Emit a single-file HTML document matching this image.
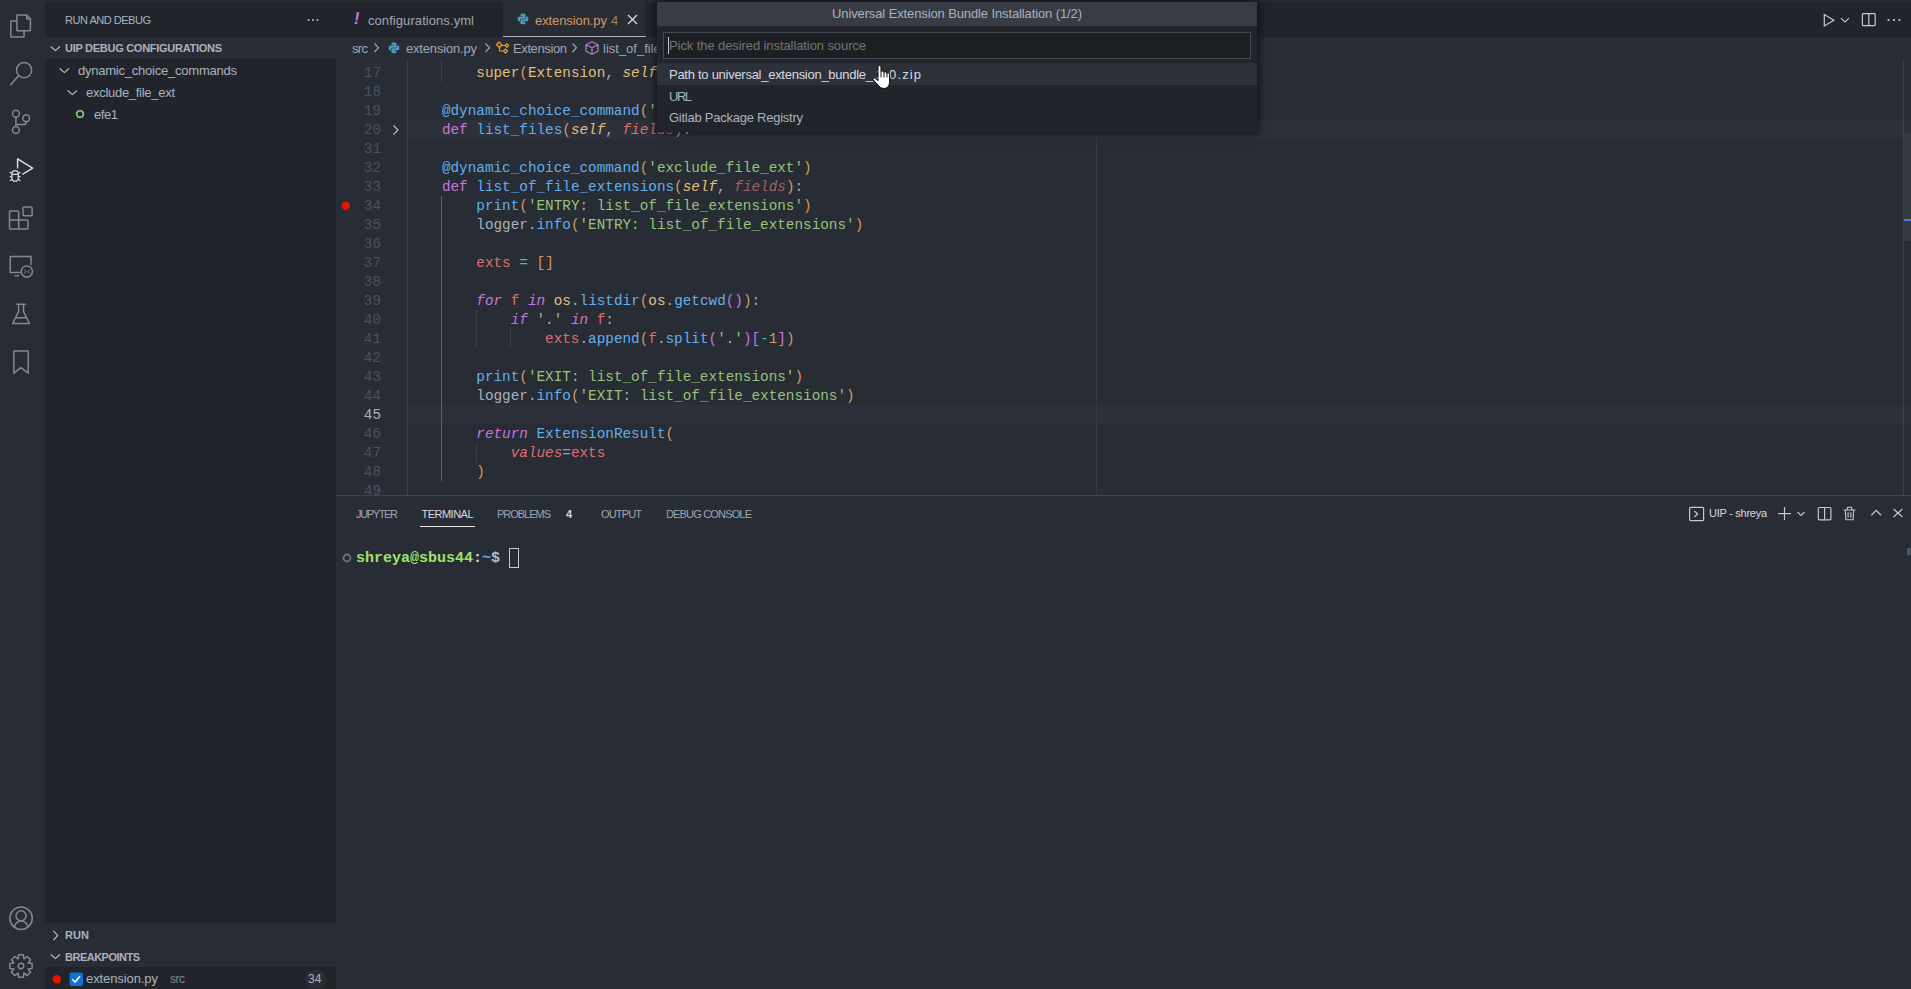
<!DOCTYPE html>
<html><head><meta charset="utf-8"><style>
html,body{margin:0;padding:0;width:1911px;height:989px;overflow:hidden;background:#282c34}
body>div,body>svg{position:absolute}
div{position:absolute}
.t{font-family:"Liberation Sans",sans-serif;white-space:pre}
.m{font-family:"Liberation Mono",monospace;font-size:14.333px;line-height:19px;white-space:pre}
.term{font-family:"Liberation Mono",monospace;font-size:15px;line-height:22px;font-weight:bold;white-space:pre}
span{position:static}
</style></head><body>
<div style="left:0px;top:0px;width:1911px;height:989px;background:#282c34;"></div>
<div style="left:45px;top:2px;width:291px;height:987px;background:#21252b;"></div>
<div style="left:336px;top:2px;width:1575px;height:35px;background:#21252b;"></div>
<div style="left:45px;top:37px;width:291px;height:22px;background:#282c34;"></div>
<div style="left:45px;top:923px;width:291px;height:44px;background:#282c34;"></div>
<svg style="position:absolute;left:0px;top:0px;" width="45" height="989" viewBox="0 0 45 989" fill="none">
<g stroke="#85888e" stroke-width="1.5" stroke-linejoin="round">
 <path d="M16.9 30.3 V15.6 Q16.9 15 17.5 15 H26.7 L30.4 18.7 V30.2 Q30.4 30.8 29.8 30.8 H17.5 Q16.9 30.8 16.9 30.2 Z"/>
 <path d="M26.7 15 V18.7 H30.4"/>
 <path d="M16.9 20.9 H11.4 Q10.8 20.9 10.8 21.5 V36.4 Q10.8 37 11.4 37 H23.5 Q24.1 37 24.1 36.4 V30.8"/>
 <circle cx="24.1" cy="70.1" r="7.6"/>
 <path d="M18.8 75.6 L10.8 84.8" stroke-linecap="round"/>
 <circle cx="15.9" cy="113.7" r="3.4"/>
 <circle cx="26.2" cy="118.2" r="3.4"/>
 <circle cx="15.9" cy="130" r="3.4"/>
 <path d="M15.9 117.1 V126.6"/>
 <path d="M26.2 121.6 V122.5 Q26.2 124.4 24.3 124.4 H15.9"/>
 <path d="M9.5 212.1 Q9.5 211.1 10.5 211.1 H17.7 Q18.7 211.1 18.7 212.1 V220 H26.9 Q27.9 220 27.9 221 V228 Q27.9 229 26.9 229 H10.5 Q9.5 229 9.5 228 Z M9.5 220 H18.7 V229"/>
 <rect x="23" y="207" width="9.1" height="8.7" rx="1"/>
 <path d="M20.5 272.6 H10.2 V256.6 H31 V265.3"/>
 <path d="M14.5 275.8 H19.2"/>
 <circle cx="26.8" cy="271.5" r="5.6"/>
 <path d="M24.2 269.8 L26 271.5 L24.2 273.2 M29.4 269.8 L27.6 271.5 L29.4 273.2" stroke-width="1"/>
 <path d="M16.3 304.2 H25.9 M18.6 304.2 V311.5 L12.6 323.6 H29.5 L23.5 311.5 V304.2 M15.6 317.8 H26.4"/>
 <path d="M13.9 350.9 H28.2 V373.2 L21 367.6 L13.9 373.2 Z"/>
 <circle cx="21.05" cy="918.2" r="11.2"/>
 <circle cx="21" cy="915.7" r="5"/>
 <path d="M14.1 927.5 Q16 921.1 21.2 921.1 Q26.4 921.1 28.2 927.3"/>
</g>
<g stroke="#d7dae0" stroke-width="1.5" stroke-linejoin="round">
 <path d="M17.6 168.6 V158.8 L32.6 168.2 L22.5 174.3"/>
 <path d="M11.9 174 Q11.9 170.7 15.1 170.7 Q18.3 170.7 18.3 174 V177.9 Q18.3 181.2 15.1 181.2 Q11.9 181.2 11.9 177.9 Z M11.9 174.3 H18.3" stroke-width="1.3"/>
 <path d="M9.7 172 L11.7 173.4 M20.5 172 L18.5 173.4 M9.7 176.6 H11.7 M18.5 176.6 H20.5 M9.7 180.8 L11.7 179.6 M20.5 180.8 L18.5 179.6" stroke-width="1.2"/>
</g>
<path d="M32.14 963.60 L32.14 968.40 L28.02 968.91 L30.58 972.18 L27.18 975.58 L23.91 973.02 L23.40 977.14 L18.60 977.14 L18.09 973.02 L14.82 975.58 L11.42 972.18 L13.98 968.91 L9.86 968.40 L9.86 963.60 L13.98 963.09 L11.42 959.82 L14.82 956.42 L18.09 958.98 L18.60 954.86 L23.40 954.86 L23.91 958.98 L27.18 956.42 L30.58 959.82 L28.02 963.09 Z" stroke="#85888e" stroke-width="1.5" stroke-linejoin="round"/><circle cx="21" cy="966" r="2.7" stroke="#85888e" stroke-width="1.5"/></svg>
<div class="t" style="left:65px;top:10.00px;font-size:11px;line-height:20px;color:#abb2bf;letter-spacing:-0.473px;">RUN AND DEBUG</div>
<svg style="position:absolute;left:300px;top:14px;" width="24" height="12" viewBox="0 0 24 12" fill="none"><circle cx="8.5" cy="6" r="1.1" fill="#abb2bf"/><circle cx="13" cy="6" r="1.1" fill="#abb2bf"/><circle cx="17.5" cy="6" r="1.1" fill="#abb2bf"/></svg>
<svg style="position:absolute;left:49.5px;top:44.7px;" width="12" height="8" viewBox="0 0 12 8" fill="none"><path d="M0.7 1.5 L5.35 5.6 L10 1.5" stroke="#c0c3c8" stroke-width="1.1"/></svg>
<div class="t" style="left:65px;top:38.00px;font-size:11px;line-height:20px;color:#abb2bf;font-weight:bold;letter-spacing:-0.277px;">UIP DEBUG CONFIGURATIONS</div>
<svg style="position:absolute;left:58.5px;top:67.0px;" width="12" height="8" viewBox="0 0 12 8" fill="none"><path d="M0.7 1.5 L5.35 5.6 L10 1.5" stroke="#c0c3c8" stroke-width="1.1"/></svg>
<div class="t" style="left:78px;top:61.20px;font-size:13px;line-height:20px;color:#abb2bf;letter-spacing:-0.229px;">dynamic_choice_commands</div>
<svg style="position:absolute;left:66.5px;top:89.0px;" width="12" height="8" viewBox="0 0 12 8" fill="none"><path d="M0.7 1.5 L5.35 5.6 L10 1.5" stroke="#c0c3c8" stroke-width="1.1"/></svg>
<div class="t" style="left:86px;top:83.20px;font-size:13px;line-height:20px;color:#abb2bf;letter-spacing:-0.282px;">exclude_file_ext</div>
<svg style="position:absolute;left:74px;top:108px;" width="12" height="12" viewBox="0 0 12 12" fill="none"><circle cx="6" cy="6" r="3.3" stroke="#89d185" stroke-width="1.6"/></svg>
<div class="t" style="left:94px;top:105.20px;font-size:13px;line-height:20px;color:#abb2bf;letter-spacing:-0.434px;">efe1</div>
<svg style="position:absolute;left:51.5px;top:929.5px;" width="8" height="12" viewBox="0 0 8 12" fill="none"><path d="M1.5 0.8 L5.6 5.45 L1.5 10.1" stroke="#c0c3c8" stroke-width="1.1"/></svg>
<div class="t" style="left:65px;top:925.00px;font-size:11px;line-height:20px;color:#abb2bf;font-weight:bold;letter-spacing:0.084px;">RUN</div>
<svg style="position:absolute;left:49.5px;top:952.7px;" width="12" height="8" viewBox="0 0 12 8" fill="none"><path d="M0.7 1.5 L5.35 5.6 L10 1.5" stroke="#c0c3c8" stroke-width="1.1"/></svg>
<div class="t" style="left:65px;top:946.80px;font-size:11px;line-height:20px;color:#abb2bf;font-weight:bold;letter-spacing:-0.506px;">BREAKPOINTS</div>
<svg style="position:absolute;left:50px;top:973px;" width="13" height="13" viewBox="0 0 13 13" fill="none"><circle cx="6.8" cy="6.2" r="4.2" fill="#e51400"/></svg>
<svg style="position:absolute;left:69px;top:972px;" width="15" height="15" viewBox="0 0 15 15" fill="none"><rect x="0.5" y="0.5" width="13.5" height="13.5" rx="2" fill="#0e72d6"/><path d="M3.3 7.3 L6 10 L11 4.2" stroke="#fff" stroke-width="1.6"/></svg>
<div class="t" style="left:86px;top:969.00px;font-size:13px;line-height:20px;color:#abb2bf;letter-spacing:-0.090px;">extension.py</div>
<div class="t" style="left:170px;top:969.00px;font-size:12px;line-height:20px;color:#7f848e;letter-spacing:-0.498px;">src</div>
<div style="left:305px;top:970px;width:21px;height:18px;background:#292d34;border-radius:9px;"></div>
<div class="t" style="left:308px;top:969.00px;font-size:12px;line-height:20px;color:#abb2bf;letter-spacing:0.000px;">34</div>
<div style="left:503px;top:2px;width:143px;height:35px;background:#282c34;"></div>
<div style="left:503px;top:36px;width:143px;height:1px;background:#b4b4b4;"></div>
<div class="t" style="left:353.5px;top:9.20px;font-size:17px;line-height:20px;color:#c678dd;font-weight:bold;letter-spacing:0.000px;transform:skewX(-10deg);">!</div>
<div class="t" style="left:368px;top:11.00px;font-size:13px;line-height:20px;color:#9da5b4;letter-spacing:0.072px;">configurations.yml</div>
<svg style="position:absolute;left:517px;top:13px;" width="12" height="12" viewBox="0 0 12 12" fill="none"><path d="M6 0.6 C3.4 0.6 3.6 1.7 3.6 1.7 V3.3 H6.1 V3.8 H2.3 C2.3 3.8 0.6 3.6 0.6 6.1 C0.6 8.6 2.1 8.5 2.1 8.5 H3 V7.3 C3 7.3 2.9 5.8 4.5 5.8 H7.1 C7.1 5.8 8.6 5.8 8.6 4.4 V2 C8.6 2 8.8 0.6 6 0.6 Z" fill="#519aba"/><path d="M6 11.4 C8.6 11.4 8.4 10.3 8.4 10.3 V8.7 H5.9 V8.2 H9.7 C9.7 8.2 11.4 8.4 11.4 5.9 C11.4 3.4 9.9 3.5 9.9 3.5 H9 V4.7 C9 4.7 9.1 6.2 7.5 6.2 H4.9 C4.9 6.2 3.4 6.2 3.4 7.6 V10 C3.4 10 3.2 11.4 6 11.4 Z" fill="#519aba"/></svg>
<div class="t" style="left:535px;top:11.00px;font-size:13px;line-height:20px;color:#d19a66;letter-spacing:-0.090px;">extension.py</div>
<div class="t" style="left:611px;top:11.00px;font-size:13px;line-height:20px;color:#a9825a;letter-spacing:0.770px;">4</div>
<svg style="position:absolute;left:626px;top:13px;" width="13" height="13" viewBox="0 0 13 13" fill="none"><path d="M2 2 L11 11 M11 2 L2 11" stroke="#d7dae0" stroke-width="1.3"/></svg>
<svg style="position:absolute;left:1818px;top:10px;" width="90" height="20" viewBox="0 0 90 20" fill="none"><path d="M6.3 4.6 V16 L15.9 10.3 Z" stroke="#c5c8ce" stroke-width="1.2" stroke-linejoin="miter"/><path d="M23 8.2 L27 12 L31 8.2" stroke="#c5c8ce" stroke-width="1.1"/><rect x="44.4" y="3.6" width="12.8" height="12" rx="0.8" stroke="#c5c8ce" stroke-width="1.2"/><path d="M50.8 3.6 V15.6" stroke="#c5c8ce" stroke-width="1.2"/><circle cx="70.5" cy="10" r="1.1" fill="#c5c8ce"/><circle cx="76" cy="10" r="1.1" fill="#c5c8ce"/><circle cx="81.5" cy="10" r="1.1" fill="#c5c8ce"/></svg>
<div class="t" style="left:352px;top:38.70px;font-size:13px;line-height:20px;color:#a0a7b4;letter-spacing:-0.665px;">src</div>
<svg style="position:absolute;left:373px;top:42px;" width="8" height="12" viewBox="0 0 8 12" fill="none"><path d="M1.5 1.5 L5.5 5.75 L1.5 10" stroke="#a0a7b4" stroke-width="1.2"/></svg>
<svg style="position:absolute;left:388px;top:42px;" width="12" height="12" viewBox="0 0 12 12" fill="none"><path d="M6 0.6 C3.4 0.6 3.6 1.7 3.6 1.7 V3.3 H6.1 V3.8 H2.3 C2.3 3.8 0.6 3.6 0.6 6.1 C0.6 8.6 2.1 8.5 2.1 8.5 H3 V7.3 C3 7.3 2.9 5.8 4.5 5.8 H7.1 C7.1 5.8 8.6 5.8 8.6 4.4 V2 C8.6 2 8.8 0.6 6 0.6 Z" fill="#519aba"/><path d="M6 11.4 C8.6 11.4 8.4 10.3 8.4 10.3 V8.7 H5.9 V8.2 H9.7 C9.7 8.2 11.4 8.4 11.4 5.9 C11.4 3.4 9.9 3.5 9.9 3.5 H9 V4.7 C9 4.7 9.1 6.2 7.5 6.2 H4.9 C4.9 6.2 3.4 6.2 3.4 7.6 V10 C3.4 10 3.2 11.4 6 11.4 Z" fill="#519aba"/></svg>
<div class="t" style="left:406px;top:38.70px;font-size:13px;line-height:20px;color:#a0a7b4;letter-spacing:-0.181px;">extension.py</div>
<svg style="position:absolute;left:484px;top:42px;" width="8" height="12" viewBox="0 0 8 12" fill="none"><path d="M1.5 1.5 L5.5 5.75 L1.5 10" stroke="#a0a7b4" stroke-width="1.2"/></svg>
<svg style="position:absolute;left:494px;top:40px;" width="16" height="16" viewBox="0 0 16 16" fill="none"><path d="M2.5 4.5 L5 2 L8 5 L5.5 7.5 Z M5.5 7.5 V11 H9.5 M7 5.5 H11 M9.5 11 L11.5 9 L13.5 11 L11.5 13 Z M11 5.5 L12.8 3.7 L14.6 5.5 L12.8 7.3 Z" stroke="#ee9d28" stroke-width="1.2" stroke-linejoin="round"/></svg>
<div class="t" style="left:513px;top:38.70px;font-size:13px;line-height:20px;color:#a0a7b4;letter-spacing:-0.387px;">Extension</div>
<svg style="position:absolute;left:571px;top:42px;" width="8" height="12" viewBox="0 0 8 12" fill="none"><path d="M1.5 1.5 L5.5 5.75 L1.5 10" stroke="#a0a7b4" stroke-width="1.2"/></svg>
<svg style="position:absolute;left:584px;top:40px;" width="16" height="16" viewBox="0 0 16 16" fill="none"><path d="M8 1.8 L14 4.8 V11.2 L8 14.2 L2 11.2 V4.8 Z M2 4.8 L8 7.8 L14 4.8 M8 7.8 V14.2" stroke="#b180d7" stroke-width="1.2" stroke-linejoin="round"/></svg>
<div class="t" style="left:603px;top:38.70px;font-size:13px;line-height:20px;color:#a0a7b4;letter-spacing:0.000px;">list_of_file_extensions</div>
<div style="left:408px;top:120px;width:1503px;height:19px;background:#2c313c;"></div>
<div style="left:408px;top:405px;width:1503px;height:19px;background:#2c313c;"></div>
<div style="left:1096px;top:59px;width:1px;height:436px;background:#363a42;"></div>
<div style="left:407px;top:59px;width:1px;height:436px;background:#3b4048;"></div>
<div style="left:441px;top:59px;width:1px;height:23px;background:#3b4048;"></div>
<div style="left:441px;top:196px;width:1px;height:285px;background:#5c6068;"></div>
<div style="left:476px;top:310px;width:1px;height:38px;background:#3b4048;"></div>
<div style="left:476px;top:443px;width:1px;height:19px;background:#3b4048;"></div>
<div style="left:510px;top:329px;width:1px;height:19px;background:#3b4048;"></div>
<div style="left:1903px;top:59px;width:1px;height:436px;background:#3a3f4a;"></div>
<div style="left:1904px;top:133px;width:7px;height:108px;background:#343942;"></div>
<div style="left:1904px;top:219px;width:7px;height:2px;background:#4d78cc;"></div>
<div style="left:336px;top:59px;width:1567px;height:436px;overflow:hidden">
<div class="m" style="left:0;top:5px;width:45px;text-align:right;color:#495162">17</div>
<div class="m" style="left:71.5px;top:5px"><span style="color:#abb2bf;">        </span><span style="color:#e5c07b;">super</span><span style="color:#d19a66;">(</span><span style="color:#e5c07b;">Extension</span><span style="color:#abb2bf;">, </span><span style="color:#e5c07b;font-style:italic;">self</span><span style="color:#abb2bf;">, </span><span style="color:#e06c75;font-style:italic;">extension_start_fields</span><span style="color:#d19a66;">)</span><span style="color:#abb2bf;">.</span><span style="color:#61afef;">__init__</span><span style="color:#d19a66;">(</span><span style="color:#e06c75;">extension_start_fields</span><span style="color:#d19a66;">)</span></div>
<div class="m" style="left:0;top:24px;width:45px;text-align:right;color:#495162">18</div>
<div class="m" style="left:71.5px;top:24px"></div>
<div class="m" style="left:0;top:43px;width:45px;text-align:right;color:#495162">19</div>
<div class="m" style="left:71.5px;top:43px"><span style="color:#abb2bf;">    </span><span style="color:#61afef;">@dynamic_choice_command</span><span style="color:#d19a66;">(</span><span style="color:#98c379;">&#x27;exclude_file&#x27;</span><span style="color:#d19a66;">)</span></div>
<div class="m" style="left:0;top:62px;width:45px;text-align:right;color:#495162">20</div>
<div class="m" style="left:71.5px;top:62px"><span style="color:#abb2bf;">    </span><span style="color:#c678dd;">def </span><span style="color:#61afef;">list_files</span><span style="color:#d19a66;">(</span><span style="color:#e5c07b;font-style:italic;">self</span><span style="color:#abb2bf;">, </span><span style="color:#e06c75;font-style:italic;">fields</span><span style="color:#d19a66;">)</span><span style="color:#abb2bf;">:</span><span style="color:#abb2bf;"> ⋯</span></div>
<div class="m" style="left:0;top:81px;width:45px;text-align:right;color:#495162">31</div>
<div class="m" style="left:71.5px;top:81px"></div>
<div class="m" style="left:0;top:100px;width:45px;text-align:right;color:#495162">32</div>
<div class="m" style="left:71.5px;top:100px"><span style="color:#abb2bf;">    </span><span style="color:#61afef;">@dynamic_choice_command</span><span style="color:#d19a66;">(</span><span style="color:#98c379;">&#x27;exclude_file_ext&#x27;</span><span style="color:#d19a66;">)</span></div>
<div class="m" style="left:0;top:119px;width:45px;text-align:right;color:#495162">33</div>
<div class="m" style="left:71.5px;top:119px"><span style="color:#abb2bf;">    </span><span style="color:#c678dd;">def </span><span style="color:#61afef;">list_of_file_extensions</span><span style="color:#d19a66;">(</span><span style="color:#e5c07b;font-style:italic;">self</span><span style="color:#abb2bf;">, </span><span style="color:#a0616a;font-style:italic;">fields</span><span style="color:#d19a66;">)</span><span style="color:#abb2bf;">:</span></div>
<div class="m" style="left:0;top:138px;width:45px;text-align:right;color:#495162">34</div>
<div class="m" style="left:71.5px;top:138px"><span style="color:#abb2bf;">        </span><span style="color:#61afef;">print</span><span style="color:#d19a66;">(</span><span style="color:#98c379;">&#x27;ENTRY: list_of_file_extensions&#x27;</span><span style="color:#d19a66;">)</span></div>
<div class="m" style="left:0;top:157px;width:45px;text-align:right;color:#495162">35</div>
<div class="m" style="left:71.5px;top:157px"><span style="color:#abb2bf;">        </span><span style="color:#abb2bf;">logger</span><span style="color:#abb2bf;">.</span><span style="color:#61afef;">info</span><span style="color:#d19a66;">(</span><span style="color:#98c379;">&#x27;ENTRY: list_of_file_extensions&#x27;</span><span style="color:#d19a66;">)</span></div>
<div class="m" style="left:0;top:176px;width:45px;text-align:right;color:#495162">36</div>
<div class="m" style="left:71.5px;top:176px"></div>
<div class="m" style="left:0;top:195px;width:45px;text-align:right;color:#495162">37</div>
<div class="m" style="left:71.5px;top:195px"><span style="color:#abb2bf;">        </span><span style="color:#e06c75;">exts</span><span style="color:#abb2bf;"> </span><span style="color:#56b6c2;">=</span><span style="color:#abb2bf;"> </span><span style="color:#d19a66;">[]</span></div>
<div class="m" style="left:0;top:214px;width:45px;text-align:right;color:#495162">38</div>
<div class="m" style="left:71.5px;top:214px"></div>
<div class="m" style="left:0;top:233px;width:45px;text-align:right;color:#495162">39</div>
<div class="m" style="left:71.5px;top:233px"><span style="color:#abb2bf;">        </span><span style="color:#c678dd;font-style:italic;">for</span><span style="color:#abb2bf;"> </span><span style="color:#e06c75;">f</span><span style="color:#abb2bf;"> </span><span style="color:#c678dd;font-style:italic;">in</span><span style="color:#abb2bf;"> </span><span style="color:#e5c07b;">os</span><span style="color:#abb2bf;">.</span><span style="color:#61afef;">listdir</span><span style="color:#d19a66;">(</span><span style="color:#e5c07b;">os</span><span style="color:#abb2bf;">.</span><span style="color:#61afef;">getcwd</span><span style="color:#c678dd;">()</span><span style="color:#d19a66;">)</span><span style="color:#abb2bf;">:</span></div>
<div class="m" style="left:0;top:252px;width:45px;text-align:right;color:#495162">40</div>
<div class="m" style="left:71.5px;top:252px"><span style="color:#abb2bf;">            </span><span style="color:#c678dd;font-style:italic;">if</span><span style="color:#abb2bf;"> </span><span style="color:#98c379;">&#x27;.&#x27;</span><span style="color:#abb2bf;"> </span><span style="color:#c678dd;font-style:italic;">in</span><span style="color:#abb2bf;"> </span><span style="color:#e06c75;">f</span><span style="color:#abb2bf;">:</span></div>
<div class="m" style="left:0;top:271px;width:45px;text-align:right;color:#495162">41</div>
<div class="m" style="left:71.5px;top:271px"><span style="color:#abb2bf;">                </span><span style="color:#e06c75;">exts</span><span style="color:#abb2bf;">.</span><span style="color:#61afef;">append</span><span style="color:#d19a66;">(</span><span style="color:#e06c75;">f</span><span style="color:#abb2bf;">.</span><span style="color:#61afef;">split</span><span style="color:#c678dd;">(</span><span style="color:#98c379;">&#x27;.&#x27;</span><span style="color:#c678dd;">)</span><span style="color:#c678dd;">[</span><span style="color:#56b6c2;">-</span><span style="color:#d19a66;">1</span><span style="color:#c678dd;">]</span><span style="color:#d19a66;">)</span></div>
<div class="m" style="left:0;top:290px;width:45px;text-align:right;color:#495162">42</div>
<div class="m" style="left:71.5px;top:290px"></div>
<div class="m" style="left:0;top:309px;width:45px;text-align:right;color:#495162">43</div>
<div class="m" style="left:71.5px;top:309px"><span style="color:#abb2bf;">        </span><span style="color:#61afef;">print</span><span style="color:#d19a66;">(</span><span style="color:#98c379;">&#x27;EXIT: list_of_file_extensions&#x27;</span><span style="color:#d19a66;">)</span></div>
<div class="m" style="left:0;top:328px;width:45px;text-align:right;color:#495162">44</div>
<div class="m" style="left:71.5px;top:328px"><span style="color:#abb2bf;">        </span><span style="color:#abb2bf;">logger</span><span style="color:#abb2bf;">.</span><span style="color:#61afef;">info</span><span style="color:#d19a66;">(</span><span style="color:#98c379;">&#x27;EXIT: list_of_file_extensions&#x27;</span><span style="color:#d19a66;">)</span></div>
<div class="m" style="left:0;top:347px;width:45px;text-align:right;color:#abb2bf">45</div>
<div class="m" style="left:71.5px;top:347px"></div>
<div class="m" style="left:0;top:366px;width:45px;text-align:right;color:#495162">46</div>
<div class="m" style="left:71.5px;top:366px"><span style="color:#abb2bf;">        </span><span style="color:#c678dd;font-style:italic;">return</span><span style="color:#abb2bf;"> </span><span style="color:#61afef;">ExtensionResult</span><span style="color:#d19a66;">(</span></div>
<div class="m" style="left:0;top:385px;width:45px;text-align:right;color:#495162">47</div>
<div class="m" style="left:71.5px;top:385px"><span style="color:#abb2bf;">            </span><span style="color:#e06c75;font-style:italic;">values</span><span style="color:#56b6c2;">=</span><span style="color:#e06c75;">exts</span></div>
<div class="m" style="left:0;top:404px;width:45px;text-align:right;color:#495162">48</div>
<div class="m" style="left:71.5px;top:404px"><span style="color:#abb2bf;">        </span><span style="color:#d19a66;">)</span></div>
<div class="m" style="left:0;top:423px;width:45px;text-align:right;color:#495162">49</div>
<div class="m" style="left:71.5px;top:423px"></div>
</div>
<svg style="position:absolute;left:340px;top:199px;" width="13" height="13" viewBox="0 0 13 13" fill="none"><circle cx="5.8" cy="6.8" r="4.25" fill="#e51400"/></svg>
<svg style="position:absolute;left:390px;top:123.5px;" width="12" height="13" viewBox="0 0 12 13" fill="none"><path d="M3.5 1.5 L8 6 L3.5 10.5" stroke="#c5c8ce" stroke-width="1.1"/></svg>
<div style="left:336px;top:495px;width:1575px;height:1px;background:#3e4452;"></div>
<div class="t" style="left:356px;top:503.60px;font-size:11px;line-height:20px;color:#9da5b4;letter-spacing:-1.353px;">JUPYTER</div>
<div class="t" style="left:421.5px;top:503.60px;font-size:11px;line-height:20px;color:#d7dae0;letter-spacing:-0.517px;">TERMINAL</div>
<div style="left:420px;top:526px;width:55px;height:1px;background:#e6e6e6;"></div>
<div class="t" style="left:497px;top:503.60px;font-size:11px;line-height:20px;color:#9da5b4;letter-spacing:-1.019px;">PROBLEMS</div>
<div class="t" style="left:566px;top:503.60px;font-size:11px;line-height:20px;color:#d7dae0;font-weight:bold;letter-spacing:-0.118px;">4</div>
<div class="t" style="left:601px;top:503.60px;font-size:11px;line-height:20px;color:#9da5b4;letter-spacing:-0.844px;">OUTPUT</div>
<div class="t" style="left:666px;top:503.60px;font-size:11px;line-height:20px;color:#9da5b4;letter-spacing:-0.831px;">DEBUG CONSOLE</div>
<svg style="position:absolute;left:1686px;top:503px;" width="230" height="22" viewBox="0 0 230 22" fill="none">
<rect x="3.6" y="4.4" width="14" height="13.2" rx="1" stroke="#c5c8ce" stroke-width="1.2"/>
<path d="M8.3 8 L11.6 11 L8.3 14" stroke="#c5c8ce" stroke-width="1.2"/>
<path d="M98.5 4 V17 M92 10.6 H105" stroke="#c5c8ce" stroke-width="1.2"/>
<path d="M111.5 9 L115 12.5 L118.5 9" stroke="#c5c8ce" stroke-width="1.1"/>
<rect x="132.3" y="4.5" width="12.6" height="12.3" rx="1" stroke="#c5c8ce" stroke-width="1.2"/><path d="M138.6 4.5 V16.8" stroke="#c5c8ce" stroke-width="1.2"/>
<path d="M157.6 7 H169.4 M161.3 7 V5 Q161.3 4.3 162 4.3 H165 Q165.7 4.3 165.7 5 V7 M159.3 7 L159.9 16.8 H167.1 L167.7 7 M162.1 9.3 V14.6 M164.9 9.3 V14.6" stroke="#c5c8ce" stroke-width="1.1"/>
<path d="M185.3 12.2 L190.2 7.4 L195.1 12.2" stroke="#c5c8ce" stroke-width="1.2"/>
<path d="M207.6 6 L216.4 14 M216.4 6 L207.6 14" stroke="#c5c8ce" stroke-width="1.2"/>
</svg>
<div class="t" style="left:1709px;top:502.80px;font-size:11px;line-height:20px;color:#d7dae0;letter-spacing:-0.266px;">UIP - shreya</div>
<div style="left:1907px;top:548px;width:4px;height:7px;background:#4e5666;"></div>
<svg style="position:absolute;left:341px;top:552px;" width="13" height="13" viewBox="0 0 13 13" fill="none"><circle cx="6" cy="6" r="3.5" stroke="#6e7279" stroke-width="1.8"/></svg>
<div class="term" style="left:356px;top:547.8px"><span style="color:#9be36b">shreya@sbus44</span><span style="color:#d7dae0">:</span><span style="color:#61afef">~</span><span style="color:#b5bcc8">$ </span></div>
<div style="left:509px;top:548px;width:9.5px;height:20px;background:transparent;border:1px solid #c5c8ce;box-sizing:border-box;"></div>
<div style="left:657px;top:2px;width:600px;height:130px;background:#21252b;box-shadow:0 0 8px 2px rgba(0,0,0,0.55);"></div>
<div style="left:657px;top:2px;width:600px;height:24px;background:#383c44;"></div>
<div class="t" style="left:832px;top:4.30px;font-size:13px;line-height:20px;color:#abb2bf;letter-spacing:-0.116px;">Universal Extension Bundle Installation (1/2)</div>
<div style="left:663px;top:32px;width:588px;height:27px;background:#1d1f23;border:1px solid #434a57;box-sizing:border-box;"></div>
<div style="left:668px;top:37px;width:1px;height:17px;background:#c5c8ce;"></div>
<div class="t" style="left:669px;top:36.00px;font-size:13px;line-height:20px;color:#72767d;letter-spacing:-0.090px;">Pick the desired installation source</div>
<div style="left:657px;top:63px;width:600px;height:22px;background:#2c313a;"></div>
<div class="t" style="left:669px;top:65.00px;font-size:13px;line-height:20px;color:#d7dae0;letter-spacing:-0.271px;">Path to universal_extension_bundle_</div>
<div class="t" style="left:876px;top:65.00px;font-size:13px;line-height:20px;color:#d7dae0;letter-spacing:1.116px;">2.0.zip</div>
<div class="t" style="left:669px;top:86.60px;font-size:13px;line-height:20px;color:#abb2bf;letter-spacing:-1.504px;">URL</div>
<div class="t" style="left:669px;top:108.20px;font-size:13px;line-height:20px;color:#abb2bf;letter-spacing:-0.248px;">Gitlab Package Registry</div>
<svg style="position:absolute;left:868px;top:62px;" width="26" height="30" viewBox="0 0 26 30" fill="none"><path d="M10 4.8 Q10 3.3 11.5 3.3 Q13 3.3 13 4.8 V9.8 Q13 9 14.5 9 Q16 9 16 10.2 V10.6 Q16 9.8 17.5 9.8 Q19 9.8 19 11 V11.5 Q19 10.8 20.3 10.8 Q21.6 10.8 21.6 12.2 V19.5 Q21.6 26.5 15.5 26.5 Q12.5 26.5 10.5 23.5 L5.2 17.8 Q4.4 16.6 5.6 16 Q6.6 15.6 7.6 16.5 L10 18.7 Z" fill="#ffffff" stroke="#000" stroke-width="1"/><path d="M13 10 V15.5 M16 10.5 V15.5 M19 11.2 V15.5" stroke="#000" stroke-width="0.9"/></svg></body></html>
